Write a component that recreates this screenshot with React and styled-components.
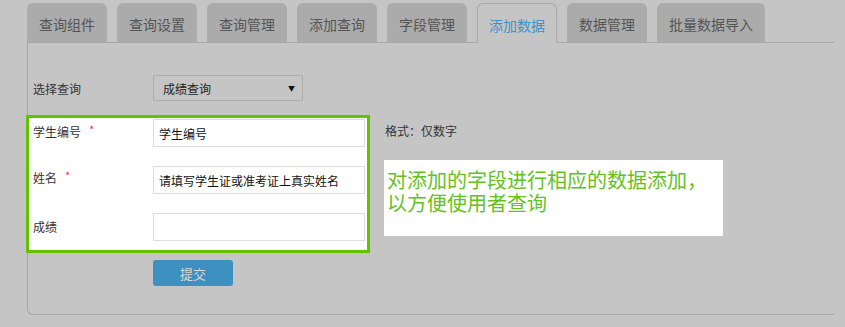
import React from "react";
import styled, { createGlobalStyle } from "styled-components";

const Global = createGlobalStyle`
  html, body { margin: 0; padding: 0; background: #c6c5c5; }
  body { font-family: "Noto Sans CJK SC", "Microsoft YaHei", sans-serif; color: #333; }
  * { box-sizing: border-box; }
`;

const Page = styled.div`
  width: 845px;
  height: 327px;
  padding: 2px 0 0 27px;
  overflow: hidden;
`;

const TabBar = styled.div`
  display: flex;
  gap: 10px;
  width: 807px;
  height: 41px;
  border-bottom: 1px solid #a7a7a7;
  align-items: flex-end;
`;

const Tab = styled.div`
  width: ${(p) => p.$w || 80}px;
  display: flex;
  align-items: center;
  justify-content: center;
  font-size: 14px;
  border-radius: 6px 6px 0 0;
  background: ${(p) => (p.$active ? "#c6c5c5" : "#ababab")};
  color: ${(p) => (p.$active ? "#3c93c8" : "#555")};
  border: ${(p) => (p.$active ? "1px solid #a9a9a9" : "none")};
  border-bottom: none;
  margin-bottom: ${(p) => (p.$active ? "-1px" : "0")};
  height: ${(p) => (p.$active ? 40 : 39)}px;
  padding-top: 3px;
`;

const Panel = styled.div`
  width: 807px;
  height: 272px;
  border-left: 1px solid #a7a7a7;
  border-bottom: 1px solid #a7a7a7;
  border-bottom-left-radius: 6px;
  padding-top: 32px;
`;

const SelectRow = styled.div`
  display: flex;
  align-items: center;
  height: 26px;
  padding-left: 5px;
`;

const Label = styled.div`
  width: 120px;
  font-size: 12px;
  color: #333;
  display: flex;
  align-items: center;
`;

const Select = styled.div`
  width: 150px;
  height: 26px;
  border: 1px solid #adadad;
  display: flex;
  align-items: center;
  justify-content: space-between;
  padding: 0 7px 0 9px;
  font-size: 12px;
  color: #222;
`;

const Arrow = styled.span`
  font-size: 7px;
  color: #111;
`;

const FormArea = styled.div`
  display: flex;
  margin-top: 14px;
  margin-left: -2px;
`;

const Highlight = styled.div`
  width: 344px;
  border: 3px solid #62c200;
  background: #fff;
  padding: 1px 2px 9px 4px;
  display: flex;
  flex-direction: column;
  gap: 19px;
`;

const FieldRow = styled.div`
  display: flex;
  align-items: center;
  height: 28px;
`;

const FieldLabel = styled(Label)`
  margin-top: ${(p) => p.$up || 0}px;
`;

const Star = styled.span`
  color: #e8306a;
  font-size: 11px;
  margin-left: 8px;
  line-height: 1;
  position: relative;
  top: -2px;
`;

const Input = styled.div`
  width: 212px;
  height: 28px;
  border: 1px solid #dcdcdc;
  background: #fff;
  font-size: 12px;
  color: #111;
  display: flex;
  align-items: center;
  padding-left: 5px;
`;

const Side = styled.div`
  margin-left: 14px;
  display: flex;
  flex-direction: column;
`;

const Hint = styled.div`
  font-size: 12px;
  color: #333;
  height: 28px;
  margin-top: 1px;
  display: flex;
  align-items: center;
  margin-left: 1px;
`;

const Note = styled.div`
  margin-top: 16px;
  width: 339px;
  height: 76px;
  background: #fff;
  color: #64c11e;
  font-size: 20px;
  line-height: 23px;
  padding: 8px 0 0 3px;
`;

const NoteLine = styled.div`
  white-space: nowrap;
`;

const Submit = styled.div`
  margin: 7px 0 0 125px;
  width: 80px;
  height: 26px;
  background: #3d91c0;
  border-radius: 3px;
  color: #d8d8d8;
  font-size: 13px;
  display: flex;
  align-items: center;
  justify-content: center;
`;

const tabs = [
  { t: "查询组件" },
  { t: "查询设置" },
  { t: "查询管理" },
  { t: "添加查询" },
  { t: "字段管理" },
  { t: "添加数据", active: true, w: 80 },
  { t: "数据管理" },
  { t: "批量数据导入", w: 108 },
];

export default function App() {
  return (
    <Page>
      <Global />
      <TabBar>
        {tabs.map((tb) => (
          <Tab key={tb.t} $active={tb.active} $w={tb.w}>
            {tb.t}
          </Tab>
        ))}
      </TabBar>
      <Panel>
        <SelectRow>
          <Label>选择查询</Label>
          <Select>
            <span>成绩查询</span>
            <Arrow>▼</Arrow>
          </Select>
        </SelectRow>
        <FormArea>
          <Highlight>
            <FieldRow>
              <FieldLabel $up={-4}>
                学生编号<Star>*</Star>
              </FieldLabel>
              <Input>学生编号</Input>
            </FieldRow>
            <FieldRow>
              <FieldLabel $up={-5}>
                姓名<Star>*</Star>
              </FieldLabel>
              <Input>请填写学生证或准考证上真实姓名</Input>
            </FieldRow>
            <FieldRow>
              <FieldLabel $up={-2}>成绩</FieldLabel>
              <Input />
            </FieldRow>
          </Highlight>
          <Side>
            <Hint>格式：仅数字</Hint>
            <Note>
              <NoteLine>对添加的字段进行相应的数据添加，</NoteLine>
              <NoteLine>以方便使用者查询</NoteLine>
            </Note>
          </Side>
        </FormArea>
        <Submit>提交</Submit>
      </Panel>
    </Page>
  );
}
